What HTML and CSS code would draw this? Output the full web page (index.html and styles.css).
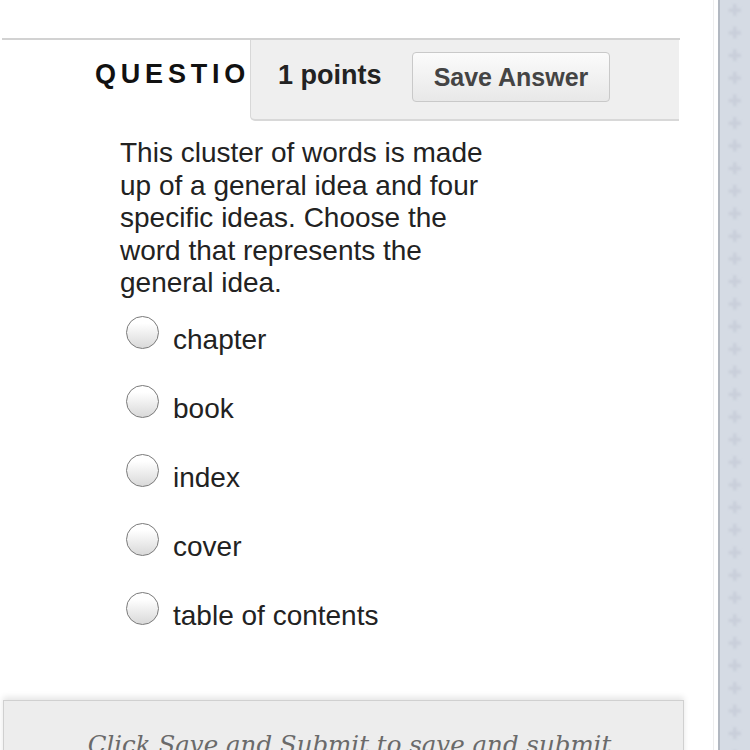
FILE: index.html
```html
<!DOCTYPE html>
<html>
<head>
<meta charset="utf-8">
<link rel="stylesheet" href="styles.css">
</head>
<body>
<div class="page">
  <div class="main">
    <div class="rule"></div>
    <div class="header">
      <div class="title">QUESTION 1</div>
      <div class="panel">
        <span class="points">1 points</span>
        <button class="save">Save Answer</button>
      </div>
    </div>
    <div class="question">This cluster of words is made up of a general idea and four specific ideas. Choose the word that represents the general idea.</div>
    <ul class="options">
      <li class="option"><span class="radio"></span><span class="label">chapter</span></li>
      <li class="option"><span class="radio"></span><span class="label">book</span></li>
      <li class="option"><span class="radio"></span><span class="label">index</span></li>
      <li class="option"><span class="radio"></span><span class="label">cover</span></li>
      <li class="option"><span class="radio"></span><span class="label">table of contents</span></li>
    </ul>
    <div class="submit-bar">Click Save and Submit to save and submit</div>
  </div>
  <div class="sidebar">
    <svg class="pattern" width="30" height="750" xmlns="http://www.w3.org/2000/svg">
      <defs>
        <filter id="soft"><feGaussianBlur stdDeviation="0.8"/></filter>
        <pattern id="plus" x="0" y="0" width="30" height="22.6" patternUnits="userSpaceOnUse">
          <g filter="url(#soft)">
            <rect x="13" y="4" width="3.5" height="12" fill="#c9cfda"/>
            <rect x="8.5" y="8.5" width="12.5" height="3.5" fill="#c9cfda"/>
          </g>
        </pattern>
      </defs>
      <rect x="0" y="0" width="30" height="750" fill="url(#plus)"/>
    </svg>
  </div>
</div>
</body>
</html>
```

FILE: styles.css
```css
html, body {
  margin: 0;
  padding: 0;
  background: #ffffff;
}

.page {
  display: flex;
  width: 750px;
  height: 750px;
  overflow: hidden;
  font-family: "Liberation Sans", Arial, sans-serif;
  color: #222;
}

.main {
  width: 713px;
  border-right: 1px solid #ededed;
  display: flex;
  flex-direction: column;
  padding-top: 38px;
  box-sizing: content-box;
}

.main > * {
  flex: none;
}

.rule {
  margin-left: 2px;
  width: 678px;
  height: 2px;
  background: #d2d2d2;
}

.header {
  display: flex;
  height: 81px;
}

.title {
  width: 155px;
  padding-left: 95px;
  padding-top: 19px;
  white-space: nowrap;
  overflow: hidden;
  font-size: 27px;
  font-weight: bold;
  letter-spacing: 4.8px;
  color: #111;
  line-height: 30px;
}

.panel {
  width: 429px;
  background: #efefef;
  border-left: 1px solid #d8d8d8;
  border-bottom: 2px solid #d8d8d8;
  border-bottom-left-radius: 5px;
  display: flex;
  align-items: flex-start;
  padding-top: 12px;
  padding-left: 27px;
  box-sizing: border-box;
}

.points {
  font-size: 27px;
  font-weight: bold;
  color: #222;
  line-height: 30px;
  padding-top: 8px;
  width: 107px;
  white-space: nowrap;
}

.save {
  margin-left: 27px;
  width: 198px;
  height: 50px;
  border: 1px solid #c9c9c9;
  border-radius: 4px;
  background: linear-gradient(#fbfbfb, #e8e8e8);
  font-family: "Liberation Sans", Arial, sans-serif;
  font-size: 25px;
  font-weight: bold;
  color: #444;
  padding: 0;
}

.question {
  margin-top: 16px;
  margin-left: 120px;
  width: 380px;
  font-size: 28px;
  line-height: 32.5px;
  color: #222;
}

.options {
  list-style: none;
  margin: 16px 0 0 126px;
  padding: 0;
}

.option {
  display: flex;
  align-items: flex-start;
  height: 69px;
}

.radio {
  width: 31px;
  height: 31px;
  border: 1.5px solid #7a7a7a;
  border-radius: 50%;
  background: linear-gradient(#ffffff 20%, #d9d9d9);
  flex: none;
}

.label {
  margin-left: 14px;
  padding-top: 7px;
  font-size: 28px;
  line-height: 34px;
  color: #222;
}

.submit-bar {
  margin-top: 39px;
  margin-left: 3px;
  width: 681px;
  height: 120px;
  box-sizing: border-box;
  background: #ededed;
  border: 1px solid #d0d0d0;
  box-shadow: 0 -3px 6px rgba(0, 0, 0, 0.10);
  padding-top: 29px;
  padding-left: 12px;
  text-align: center;
  font-family: "DejaVu Serif", Georgia, serif;
  font-style: italic;
  font-size: 24.5px;
  color: #6a6a6a;
  white-space: nowrap;
}

.sidebar {
  margin-left: 4px;
  width: 30px;
  height: 750px;
  border-left: 2px solid #b2b8c1;
  background: #d5dbe4;
}

.pattern {
  display: block;
}
```
